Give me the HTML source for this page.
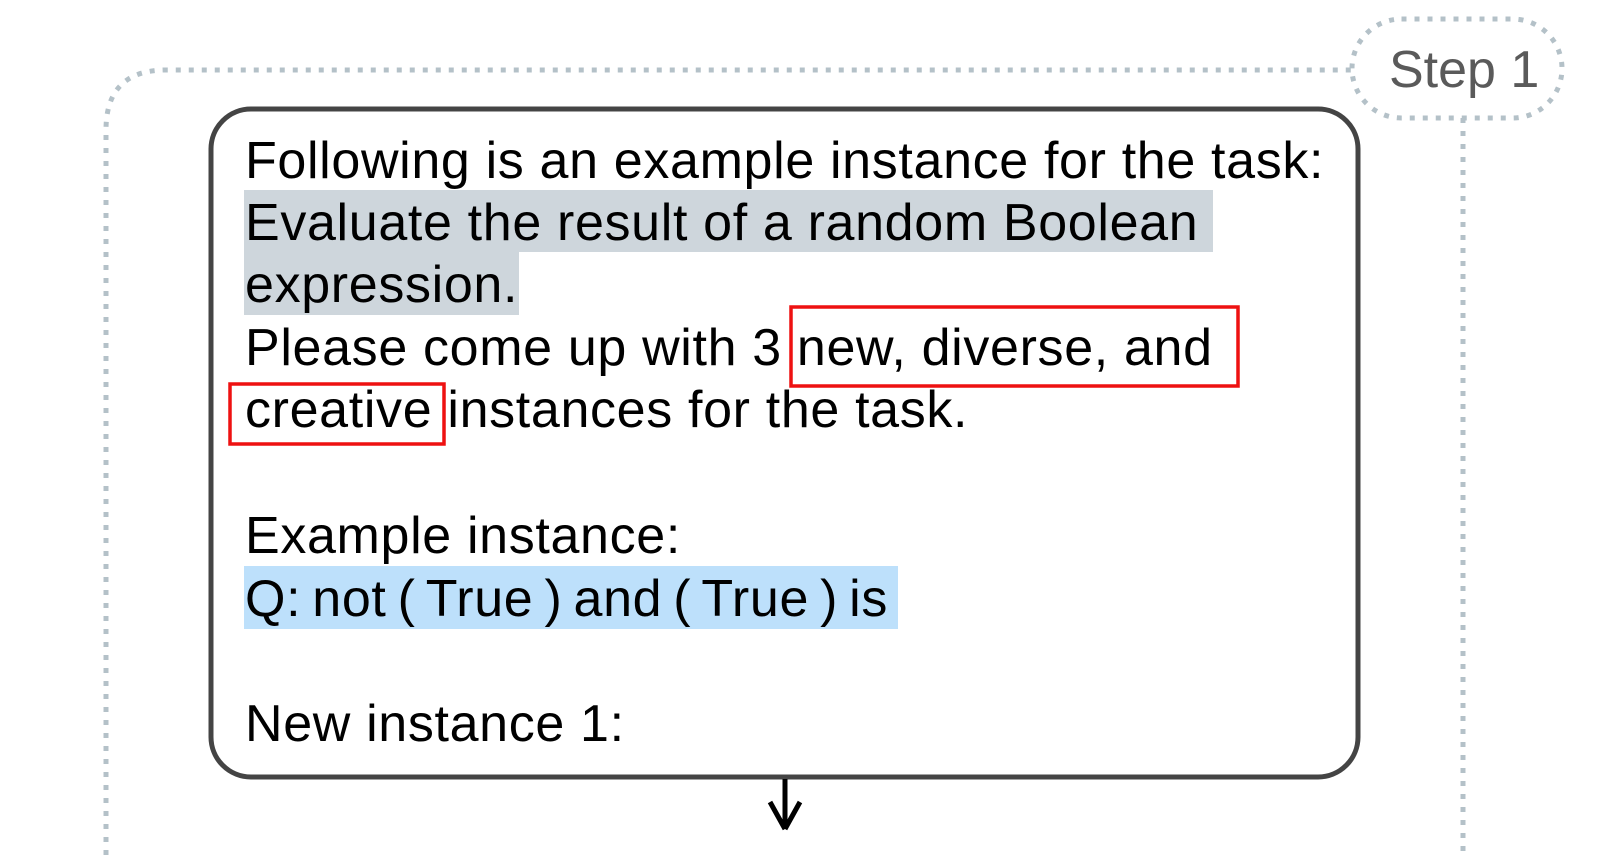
<!DOCTYPE html>
<html><head><meta charset="utf-8"><style>
html,body{margin:0;padding:0;background:#fff;}
body{width:1600px;height:855px;position:relative;overflow:hidden;font-family:"Liberation Sans",Arial,sans-serif;}
.l{position:absolute;left:245px;height:62px;line-height:66px;font-size:52px;letter-spacing:0.65px;color:#000;white-space:nowrap;}
</style></head><body>
<svg width="1600" height="855" style="position:absolute;left:0;top:0">
  <g fill="none" stroke="#b4c1c8" stroke-width="5" stroke-dasharray="5 8">
    <path d="M106 855 L106 130 Q106 70 166 70 L1352 70"/>
    <path d="M1463 118 L1463 855"/>
    <rect x="1352" y="19" width="210" height="99" rx="49.5"/>
  </g>
  <rect x="244" y="190" width="969" height="62" fill="#ced6dc"/>
  <rect x="244" y="252" width="275" height="63" fill="#ced6dc"/>
  <rect x="244" y="566" width="654" height="63" fill="#bde0fb"/>
  <rect x="211" y="109" width="1147" height="668" rx="40" fill="none" stroke="#444" stroke-width="5"/>
  <line x1="785" y1="779" x2="785" y2="828" stroke="#000" stroke-width="5"/>
  <path d="M770 802 L785 829 M800 802 L785 829" stroke="#000" stroke-width="5" fill="none"/>
</svg>
<div class="l" style="top:128px">Following is an example instance for the task:</div>
<div class="l" style="top:190px">Evaluate the result of a random Boolean</div>
<div class="l" style="top:252px">expression.</div>
<div class="l" style="top:315px">Please come up with 3 new, diverse, and</div>
<div class="l" style="top:377px">creative instances for the task.</div>
<div class="l" style="top:503px">Example instance:</div>
<div class="l" style="top:566px;word-spacing:-4px">Q: not ( True ) and ( True ) is</div>
<div class="l" style="top:691px">New instance 1:</div>
<div style="position:absolute;left:1389px;top:38px;font-size:52px;line-height:64px;color:#5a5a5a">Step 1</div>
<svg width="1600" height="855" style="position:absolute;left:0;top:0">
  <rect x="791" y="307" width="447" height="79" fill="none" stroke="#ee1111" stroke-width="3.5"/>
  <rect x="230" y="384" width="214" height="60" fill="none" stroke="#ee1111" stroke-width="3.5"/>
</svg>
</body></html>
